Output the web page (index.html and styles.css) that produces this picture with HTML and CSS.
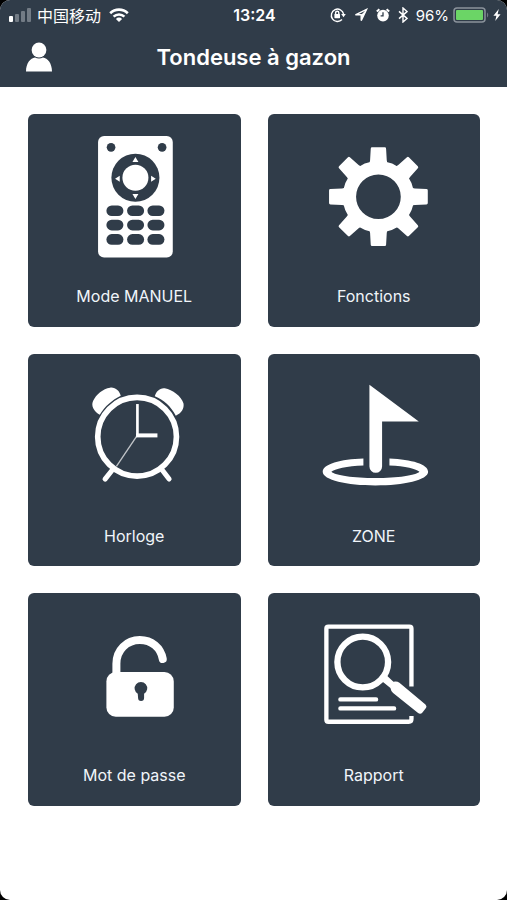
FILE: index.html
```
<!DOCTYPE html>
<html lang="fr">
<head>
    <meta charset="UTF-8">
    <meta name="viewport" content="width=device-width, initial-scale=1.0">
    <title>Tondeuse à gazon</title>
    <link rel="stylesheet" href="styles.css">
</head>
<body>

<div class="screen">
    <header class="header">
        <div class="status-bar">
            <div class="status-left">
                <svg class="signal" width="24" height="14" viewBox="0 0 24 14">
                    <rect x="1" y="8" width="4" height="6" rx="1"/>
                    <rect class="dim" x="7" y="6" width="4" height="8" rx="1"/>
                    <rect class="dim" x="13" y="3" width="4" height="11" rx="1"/>
                    <rect class="dim" x="19" y="0" width="4" height="14" rx="1"/>
                </svg>
                <span class="carrier" lang="zh">中国移动</span>
                <svg width="20" height="14" viewBox="0 0 20 14">
                    <path class="wave" d="M1.2 5.2a12.6 12.6 0 0 1 17.6 0M4.6 8.6a7.8 7.8 0 0 1 10.8 0"/>
                    <path d="M10 14 6.9 10.9a4.4 4.4 0 0 1 6.2 0z"/>
                </svg>
            </div>
            <span class="time">13:24</span>
            <div class="status-right">
                <svg width="16" height="16" viewBox="0 0 16 16">
                    <path class="thin" d="M12 12.6A6.2 6.2 0 1 1 13.6 7"/>
                    <path d="M11.2 7h4.6l-2.3 3.2z"/>
                    <rect x="4.4" y="7" width="5.6" height="4.2" rx=".6"/>
                    <path class="thin" d="M5.600 7V5.800a1.600 1.600 0 0 1 3.200 0V7"/>
                </svg>
                <svg width="14" height="14" viewBox="0 0 14 14">
                    <path class="thin" d="M12.6 1.4 1.4 6.8h5.8v5.8z"/>
                    <path d="M12.6 1.4 7.2 6.800v5.800z"/>
                </svg>
                <svg width="14" height="14" viewBox="0 0 14 14">
                    <circle cx="7" cy="7.6" r="5.8"/>
                    <path class="ear" d="M.8 3.4 3.4 1.2M13.2 3.4 10.6 1.2"/>
                    <path class="alarm-hands" d="M7 4.2v3.6H4.6"/>
                </svg>
                <svg width="10" height="16" viewBox="0 0 10 16">
                    <path class="thin" d="M1 4.4 9 11.4 5 15V1l4 3.6-8 7"/>
                </svg>
                <span class="percent">96%</span>
                <svg class="battery" width="36" height="16" viewBox="0 0 36 16">
                    <rect class="battery-case" x="1" y="1" width="31" height="14" rx="3"/>
                    <rect class="battery-level" x="3" y="3" width="27" height="10" rx="1"/>
                    <path class="dim" d="M34 5.5c1.6.8 1.6 4.2 0 5z"/>
                </svg>
                <svg width="8" height="14" viewBox="0 0 8 14">
                    <path d="M5.8 1 .4 7.8h3L2.2 13l5.4-6.8h-3z"/>
                </svg>
            </div>
        </div>
        <div class="title-bar">
            <button class="user-button" type="button" aria-label="Compte">
                <svg width="26" height="30" viewBox="0 0 26 30">
                    <circle cx="13" cy="8" r="7.4"/>
                    <path d="M0 29.5C0 21 4.5 16 9 15.4c2.5 1.4 5.5 1.4 8 0C21.5 16 26 21 26 29.5z"/>
                </svg>
            </button>
            <h1 class="title">Tondeuse à gazon</h1>
        </div>
    </header>

    <nav class="menu">
        <a class="card" href="#manuel">
            <svg class="card-icon" viewBox="24 27 637 480">
                <rect x="234" y="93" width="224" height="364" rx="18"/>
                <g class="cut">
                    <circle cx="273" cy="127" r="13"/>
                    <circle cx="426" cy="127" r="13"/>
                    <circle cx="346" cy="218" r="72"/>
                    <rect x="259" y="301" width="51" height="32" rx="16"/>
                    <rect x="321" y="301" width="51" height="32" rx="16"/>
                    <rect x="382" y="301" width="51" height="32" rx="16"/>
                    <rect x="259" y="344" width="51" height="32" rx="16"/>
                    <rect x="321" y="344" width="51" height="32" rx="16"/>
                    <rect x="382" y="344" width="51" height="32" rx="16"/>
                    <rect x="259" y="387" width="51" height="32" rx="16"/>
                    <rect x="321" y="387" width="51" height="32" rx="16"/>
                    <rect x="382" y="387" width="51" height="32" rx="16"/>
                </g>
                <circle cx="346" cy="218" r="39"/>
                <path d="M346 156l9 15h-18zM346 282l9-15h-18zM285 221l14-9v18zM407 221l-14-9v18z"/>
            </svg>
            <span class="card-label">Mode MANUEL</span>
        </a>

        <a class="card" href="#fonctions">
            <svg class="card-icon" viewBox="23 27 637 480">
                <defs>
                    <path id="tooth" d="M322 182Q329 176 329 166L331 131Q331 127 335 127H373Q377 127 377 131L379 166Q379 176 386 182z"/>
                </defs>
                <circle class="gear-ring" cx="354" cy="275" r="87"/>
                <use href="#tooth"/>
                <use href="#tooth" transform="rotate(45 354 275)"/>
                <use href="#tooth" transform="rotate(90 354 275)"/>
                <use href="#tooth" transform="rotate(135 354 275)"/>
                <use href="#tooth" transform="rotate(180 354 275)"/>
                <use href="#tooth" transform="rotate(225 354 275)"/>
                <use href="#tooth" transform="rotate(270 354 275)"/>
                <use href="#tooth" transform="rotate(315 354 275)"/>
            </svg>
            <span class="card-label">Fonctions</span>
        </a>

        <a class="card" href="#horloge">
            <svg class="card-icon" viewBox="24 27 637 480">
                <path d="M239 209C222 200 212 183 219 168C228 148 249 131 270 128C286 126 298 138 302 152C276 165 255 183 239 209z"/>
                <path d="M467 212C484 205 493 190 490 175C484 154 457 134 434 130C419 128 408 140 404 154C431 165 452 184 467 212z"/>
                <circle class="line w17" cx="351" cy="275" r="118"/>
                <path class="line w15 round" d="M275 377 255 402M428 377 447 402"/>
                <path class="line w8" d="M352 177V272"/>
                <path class="line w12" d="M348 271H412"/>
                <path class="line w4 faint" d="M351 272 289 364"/>
            </svg>
            <span class="card-label">Horloge</span>
        </a>

        <a class="card" href="#zone">
            <svg class="card-icon" viewBox="23 27 637 480">
                <path d="M327 119 475 229H365V364a19 19 0 0 1-38 0z"/>
                <path fill-rule="evenodd" d="M309 340V361C260 363 222 371 213 380C224 391 280 399 345 399C412 399 466 391 477 380C468 371 435 363 387 361V340C454 343 503 357 503 380C503 405 430 421 345 421C260 421 187 405 187 380C187 357 240 342 309 340z"/>
            </svg>
            <span class="card-label">ZONE</span>
        </a>

        <a class="card" href="#mot-de-passe">
            <svg class="card-icon" viewBox="24 24 637 480">
                <rect x="259" y="261" width="202" height="134" rx="28"/>
                <path class="line w24 round" d="M289 275V236C289 195 320 165 359 165C395 165 422 188 428 222"/>
                <path class="cut" d="M353 326a19 19 0 1 1 19 0v13a9 9 0 0 1-18 0z"/>
            </svg>
            <span class="card-label">Mot de passe</span>
        </a>

        <a class="card" href="#rapport">
            <svg class="card-icon" viewBox="23 24 637 480">
                <path class="line w13" d="M453 304V131Q453 125 447 125H204Q198 125 198 131V404Q198 410 204 410H445Q453 410 453 402V393"/>
                <circle class="line w19" cx="307" cy="231" r="76"/>
                <path class="line w13 round" d="M240 343H347M240 370H401"/>
                <path d="M379 271 399 290Q409 287 417 293L495 358Q500 363 497 368L486 382Q480 389 472 383L398 324Q391 317 390 309L364 288z"/>
            </svg>
            <span class="card-label">Rapport</span>
        </a>
    </nav>
</div>

</body>
</html>
```
FILE: styles.css
```
* {
    box-sizing: border-box;
}
body {
    margin: 0;
    background-color: #000;
    font-family: Inter, "Noto Sans CJK SC", sans-serif;
}
svg {
    display: block;
    flex-shrink: 0;
    fill: #fff;
}
.screen {
    min-height: 100vh;
    background-color: #fff;
    border-radius: 10px;
    overflow: hidden;
}
.header {
    padding-bottom: 3px;
    background-color: #303c49;
    color: #fff;
}
.status-bar {
    display: grid;
    grid-template-columns: 1fr auto 1fr;
    align-items: center;
    height: 30px;
    padding: 0 6px 0 8px;
    font-size: 16px;
}
.status-left, .status-right {
    display: flex;
    align-items: center;
    gap: 8px;
}
.status-left {
    gap: 5px;
}
.status-right {
    justify-content: flex-end;
}
.time {
    font-weight: 600;
}
.carrier {
    margin-right: 3px;
}
.percent {
    font-size: 15px;
}
.battery {
    margin: 0 -4px;
}
.dim {
    fill: #727b85;
}
.wave {
    fill: none;
    stroke: #fff;
    stroke-width: 2.6;
}
.thin, .ear {
    fill: none;
    stroke: #fff;
    stroke-width: 1.4;
}
.ear {
    stroke-width: 2;
}
.alarm-hands {
    fill: none;
    stroke: #303c49;
    stroke-width: 1.3;
}
.battery-case {
    fill: none;
    stroke: #8a929b;
    stroke-width: 1.5;
}
.battery-level {
    fill: #6bd566;
}
.title-bar {
    display: grid;
    grid-template-columns: 1fr auto 1fr;
    align-items: center;
    height: 54px;
    padding: 0 26px;
}
.user-button {
    justify-self: start;
    padding: 0;
    border: none;
    background: none;
    cursor: pointer;
}
.title {
    margin: 0;
    font-size: 22px;
    font-weight: 600;
    line-height: 30px;
}
.menu {
    display: grid;
    grid-template-columns: 1fr 1fr;
    gap: 27px;
    padding: 27px 27px 27px 28px;
}
.card {
    display: flex;
    flex-direction: column;
    aspect-ratio: 1;
    border-radius: 6px;
    background-color: #303c49;
    color: #f0f5fa;
    text-align: center;
    text-decoration: none;
}
.card-icon {
    width: 100%;
}
.card-label {
    margin-top: 12px;
    font-size: 16px;
    line-height: 20px;
}
.cut {
    fill: #303c49;
}
.line, .gear-ring {
    fill: none;
    stroke: #fff;
}
.gear-ring {
    stroke-width: 40;
}
.round {
    stroke-linecap: round;
}
.faint {
    opacity: 0.7;
}
.w4 {
    stroke-width: 4;
}
.w8 {
    stroke-width: 8;
}
.w12 {
    stroke-width: 12;
}
.w13 {
    stroke-width: 13;
}
.w15 {
    stroke-width: 15;
}
.w17 {
    stroke-width: 17;
}
.w19 {
    stroke-width: 19;
}
.w24 {
    stroke-width: 24;
}
```
